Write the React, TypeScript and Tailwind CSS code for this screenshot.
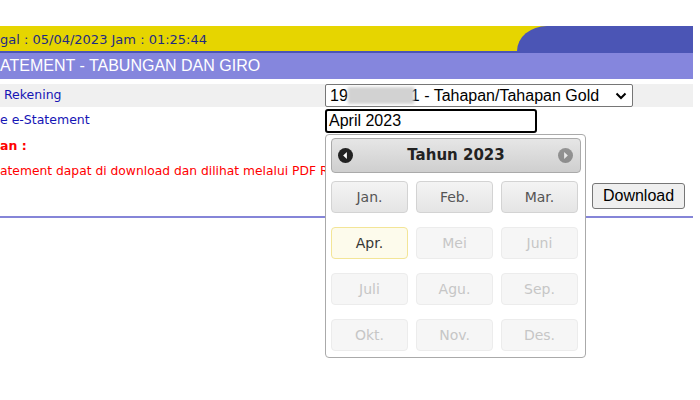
import React from "react";

const months = [
  { label: "Jan.", state: "normal" },
  { label: "Feb.", state: "normal" },
  { label: "Mar.", state: "normal" },
  { label: "Apr.", state: "active" },
  { label: "Mei", state: "disabled" },
  { label: "Juni", state: "disabled" },
  { label: "Juli", state: "disabled" },
  { label: "Agu.", state: "disabled" },
  { label: "Sep.", state: "disabled" },
  { label: "Okt.", state: "disabled" },
  { label: "Nov.", state: "disabled" },
  { label: "Des.", state: "disabled" },
];

function CircleArrow({ dir, dim }: { dir: "w" | "e"; dim?: boolean }) {
  return (
    <svg width="15" height="15" viewBox="0 0 14 14" className={dim ? "opacity-40" : ""}>
      <circle cx="7" cy="7" r="7" fill="#222" />
      {dir === "w" ? (
        <path d="M8.3 3.8 L4.8 7 L8.3 10.2 Z" fill="#fff" />
      ) : (
        <path d="M5.7 3.8 L9.2 7 L5.7 10.2 Z" fill="#fff" />
      )}
    </svg>
  );
}

function MonthButton({ label, state }: { label: string; state: string }) {
  const cls =
    state === "active"
      ? "bg-[#fdfbec] border-[#f3e597] text-[#363636]"
      : state === "disabled"
      ? "bg-[#f6f6f6] border-[#ececec] text-[#c6c6c6]"
      : "bg-gradient-to-b from-[#f4f4f4] to-[#e5e5e5] border-[#d3d3d3] text-[#555]";
  return (
    <div
      className={`h-[32px] rounded-[4px] border flex items-center justify-center text-[14px] ${cls}`}
    >
      {label}
    </div>
  );
}

export default function App() {
  return (
    <div className="relative w-[700px] h-[400px] overflow-hidden bg-white font-['DejaVu_Sans',Verdana,sans-serif]">
      <div className="h-[26px]" />

      {/* top bar */}
      <div className="w-[693px] h-[25px] flex bg-[#e6d500]">
        <div className="flex-1 flex items-center text-[13px] text-[#1f2b82] pt-[2px] whitespace-nowrap">
          gal : 05/04/2023 Jam : 01:25:44
        </div>
        <div className="w-[176px] bg-[#4b55b5] rounded-tl-[30px_25px]" />
      </div>
      <div className="w-[693px] h-[2px] bg-[#4b55b5]" />

      {/* title */}
      <div className="w-[693px] h-[26px] bg-[#8586dd] flex items-center text-white text-[16px] font-['Liberation_Sans',Arial,sans-serif] whitespace-nowrap">
        ATEMENT - TABUNGAN DAN GIRO
      </div>

      <div className="h-[5px]" />

      {/* rekening */}
      <div className="w-[693px] h-[23px] bg-[#f0f0f0] flex items-center">
        <div className="w-[325px] pl-[4px] text-[12.5px] text-[#1515b5]">Rekening</div>
        <div className="w-[308px] h-[23px] border border-[#767676] rounded-[2px] bg-white flex items-center pl-[4px] pr-[5px] text-[16px] text-black font-['Liberation_Sans',Arial,sans-serif] whitespace-nowrap">
          <span>19</span>
          <span className="relative z-10 inline-block w-[66px] h-[17px] -mr-[3px] bg-[#d2d2d2] blur-[1.5px]" />
          <span>1 - Tahapan/Tahapan Gold</span>
          <svg width="12" height="8" viewBox="0 0 12 8" className="ml-auto">
            <path d="M1.5 1.5 L6 6 L10.5 1.5" fill="none" stroke="#000" strokeWidth="2" />
          </svg>
        </div>
      </div>

      {/* periode */}
      <div className="h-[26px] flex items-center">
        <div className="w-[325px] text-[12.5px] text-[#1515b5] whitespace-nowrap">e e-Statement</div>
        <div className="w-[212px] h-[24px] mt-[2px] border-2 border-black rounded-[3px] flex items-center pl-[2px] text-[16px] text-black font-['Liberation_Sans',Arial,sans-serif]">
          April 2023
        </div>
      </div>

      {/* keterangan */}
      <div className="h-[27px] flex items-center text-[12.5px] font-bold text-[#ff0000]">an :</div>
      <div className="h-[23px] flex items-center text-[12.3px] text-[#ff0000] whitespace-nowrap">
        atement dapat di download dan dilihat melalui PDF Reader
      </div>

      <div className="h-[33px]">
        <div className="ml-[592px] w-[93px] h-[26px] border border-[#767676] rounded-[3px] bg-[#efefef] flex items-center justify-center text-[16px] text-black font-['Liberation_Sans',Arial,sans-serif]">
          Download
        </div>
      </div>
      <div className="w-[693px] h-[2px] bg-[#8585d8]" />

      {/* month picker popup */}
      <div className="absolute left-[325px] top-[134px] w-[261px] h-[224px] bg-white border border-[#aaaaaa] rounded-[4px] pl-[5px] pr-[4px] pt-[3px]">
        <div className="relative h-[35px] rounded-[4px] border border-[#aaaaaa] bg-gradient-to-b from-[#e6e6e6] to-[#cfcfcf] flex items-center justify-center text-[15px] font-bold text-[#222]">
          <div className="absolute left-[6px] top-[9px]">
            <CircleArrow dir="w" />
          </div>
          Tahun 2023
          <div className="absolute right-[7px] top-[9px]">
            <CircleArrow dir="e" dim />
          </div>
        </div>
        <div className="mt-[8px] grid grid-cols-[77px_77px_77px] gap-x-[8px] gap-y-[14px]">
          {months.map((m) => (
            <MonthButton key={m.label} label={m.label} state={m.state} />
          ))}
        </div>
      </div>
    </div>
  );
}
